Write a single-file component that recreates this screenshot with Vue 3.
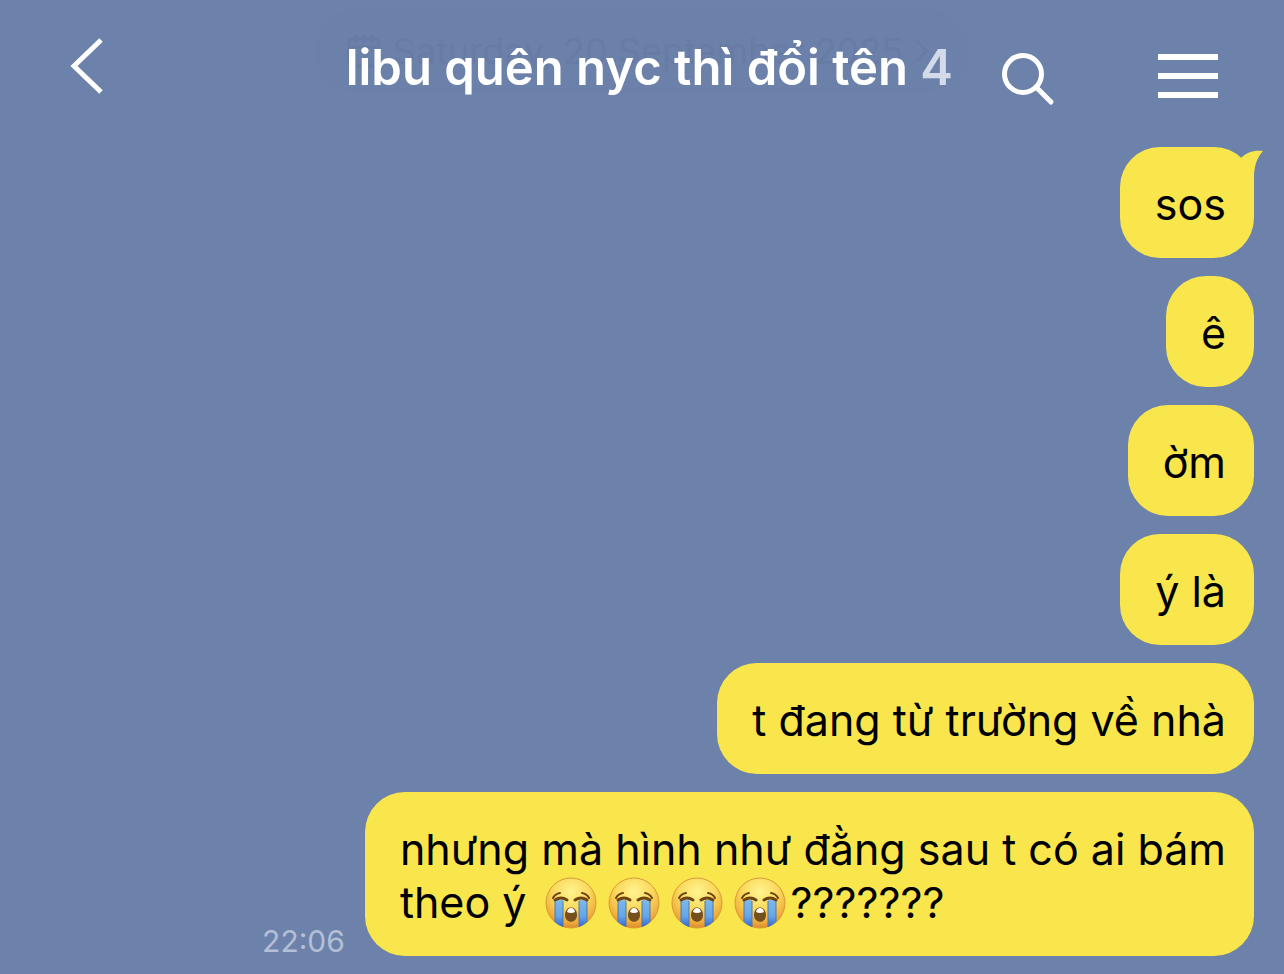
<template>
  <div class="chat">
    <header class="chat-header">
      <div class="date-pill" aria-hidden="true">
        <svg class="date-icon" viewBox="0 0 34 34">
          <rect x="2" y="5" width="30" height="27" rx="4" />
          <path d="M9 1v8M17 1v8M25 1v8M2 13h30" />
        </svg>
        <span>Saturday, 20 September 2025</span>
        <svg class="date-arrow" viewBox="0 0 14 24">
          <path d="M2 2l10 10L2 22" />
        </svg>
      </div>

      <button class="icon-btn back-btn" aria-label="Back">
        <svg width="34" height="58" viewBox="0 0 34 58">
          <path d="M31 3L4 29l27 26" />
        </svg>
      </button>
      <h1 class="title">
        {{ room.name }} <span class="count">{{ room.members }}</span>
      </h1>
      <button class="icon-btn search-btn" aria-label="Search">
        <svg width="54" height="54" viewBox="0 0 54 54">
          <circle cx="21" cy="22" r="18.5" />
          <path d="M34 35l15 15" stroke-linecap="round" />
        </svg>
      </button>
      <button class="icon-btn menu-btn" aria-label="Menu">
        <svg width="60" height="46" viewBox="0 0 60 46">
          <path d="M0 4h60M0 23h60M0 42h60" />
        </svg>
      </button>
    </header>

    <main class="messages">
      <div v-for="(msg, i) in messages" :key="i" class="row">
        <time v-if="msg.time" class="time">{{ msg.time }}</time>
        <div class="bubble">
          <svg v-if="msg.tail" class="tail" viewBox="0 0 30 46" aria-hidden="true">
            <path d="M7 11C13 5 20 3 29 4C22 12 20 20 20 32V46H0V20z" />
          </svg>
          <template v-for="(part, j) in msg.parts" :key="j">
            <svg v-if="part === CRY" class="emoji" viewBox="0 0 52 52" role="img" aria-label="crying">
              <defs>
                <radialGradient :id="`face${j}`" cx="50%" cy="28%" r="72%">
                  <stop offset="0" stop-color="#fff490" />
                  <stop offset="0.5" stop-color="#fbd95c" />
                  <stop offset="0.85" stop-color="#efaa3c" />
                  <stop offset="1" stop-color="#dc8a2e" />
                </radialGradient>
                <linearGradient :id="`tear${j}`" x1="0" y1="0" x2="0" y2="1">
                  <stop offset="0" stop-color="#7db8ea" />
                  <stop offset="0.6" stop-color="#64a6ea" />
                  <stop offset="1" stop-color="#2f68cf" />
                </linearGradient>
              </defs>
              <circle cx="26" cy="26" r="25" :fill="`url(#face${j})`" class="face" />
              <path d="M10 23h8v27Q13 48 10 45z" :fill="`url(#tear${j})`" />
              <path d="M34 23h8v22Q39 48 34 50z" :fill="`url(#tear${j})`" />
              <path d="M10 24v21M18 24v26M34 24v26M42 24v21" class="tear-edge" />
              <path d="M10 23Q16 19 22 23M30 23Q36 19 42 23" class="eye" />
              <path d="M8 21Q10 17 15 16M37 16Q42 17 44 21" class="brow" />
              <path d="M20 38c0-10 12-10 12 0c0 9-12 9-12 0z" fill="#75501c" />
              <path d="M22 35q1-4 4-4t4 4q-4 2-8 0z" fill="#fff" />
            </svg>
            <template v-else>{{ part }}</template>
          </template>
        </div>
      </div>
    </main>
  </div>
</template>

<script setup>
const CRY = '😭'

const room = { name: 'libu quên nyc thì đổi tên', members: 4 }

const messages = [
  { parts: ['sos'], tail: true },
  { parts: ['ê'] },
  { parts: ['ờm'] },
  { parts: ['ý là'] },
  { parts: ['t đang từ trường về nhà'] },
  {
    parts: ['nhưng mà hình như đằng sau t có ai bám\ntheo ý ', CRY, CRY, CRY, CRY, '???????'],
    time: '22:06',
  },
]
</script>

<style>
body {
  background: #6d82aa;
}
</style>

<style scoped>
.chat {
  min-height: 100vh;
  background: #6d82aa;
  font-family: Inter, 'Liberation Sans', sans-serif;
  color: #000;
}

.chat-header {
  position: relative;
  display: flex;
  align-items: flex-start;
  height: 131px;
  padding: 0 66px 0 70px;
}

.date-pill {
  position: absolute;
  top: 10px;
  left: 50%;
  transform: translateX(-50%);
  display: flex;
  align-items: center;
  gap: 12px;
  height: 82px;
  padding: 0 40px 0 32px;
  box-sizing: border-box;
  border-radius: 41px;
  background: #6c81a9;
  color: #677ca5;
  font-size: 36px;
  white-space: nowrap;
}

.date-pill svg {
  fill: none;
  stroke: currentColor;
  stroke-width: 3;
}

.date-icon {
  width: 34px;
  height: 34px;
}

.date-arrow {
  width: 14px;
  height: 24px;
}

.icon-btn {
  position: relative;
  flex: none;
  padding: 0;
  border: none;
  background: none;
  cursor: pointer;
}

.icon-btn svg {
  display: block;
  fill: none;
  stroke: #fff;
  stroke-width: 5;
}

.back-btn {
  margin-top: 37px;
}

.title {
  position: relative;
  margin: 40px 49px 0 auto;
  font-size: 49px;
  line-height: 56px;
  font-weight: 600;
  color: #fff;
  white-space: nowrap;
}

.count {
  color: #d3daea;
}

.search-btn {
  margin-top: 52px;
}

.menu-btn {
  margin-top: 53px;
  margin-left: 102px;
}

.menu-btn svg {
  stroke-width: 6;
}

.messages {
  display: flex;
  flex-direction: column;
  gap: 18px;
  padding: 16px 30px 17px;
}

.row {
  display: flex;
  justify-content: flex-end;
  align-items: flex-end;
  gap: 20px;
}

.time {
  color: #b3bfd6;
  font-size: 30px;
  line-height: 30px;
}

.bubble {
  position: relative;
  max-width: 75%;
  box-sizing: border-box;
  padding: 31px 28px 27px 35px;
  border-radius: 40px;
  background: #f9e64c;
  font-size: 43px;
  line-height: 53px;
  white-space: pre-line;
}

.tail {
  position: absolute;
  top: 0;
  right: -10px;
  width: 30px;
  height: 46px;
  fill: #f9e64c;
}

.emoji {
  width: 52px;
  height: 52px;
  margin: 0 5px 0 6px;
  vertical-align: -11px;
}

.face {
  stroke: #dc9a35;
  stroke-width: 1;
}

.tear-edge {
  fill: none;
  stroke: #5577a0;
  stroke-width: 1;
}

.eye,
.brow {
  fill: none;
  stroke: #6e4410;
  stroke-width: 3;
  stroke-linecap: round;
}

.brow {
  stroke-width: 2;
}
</style>
